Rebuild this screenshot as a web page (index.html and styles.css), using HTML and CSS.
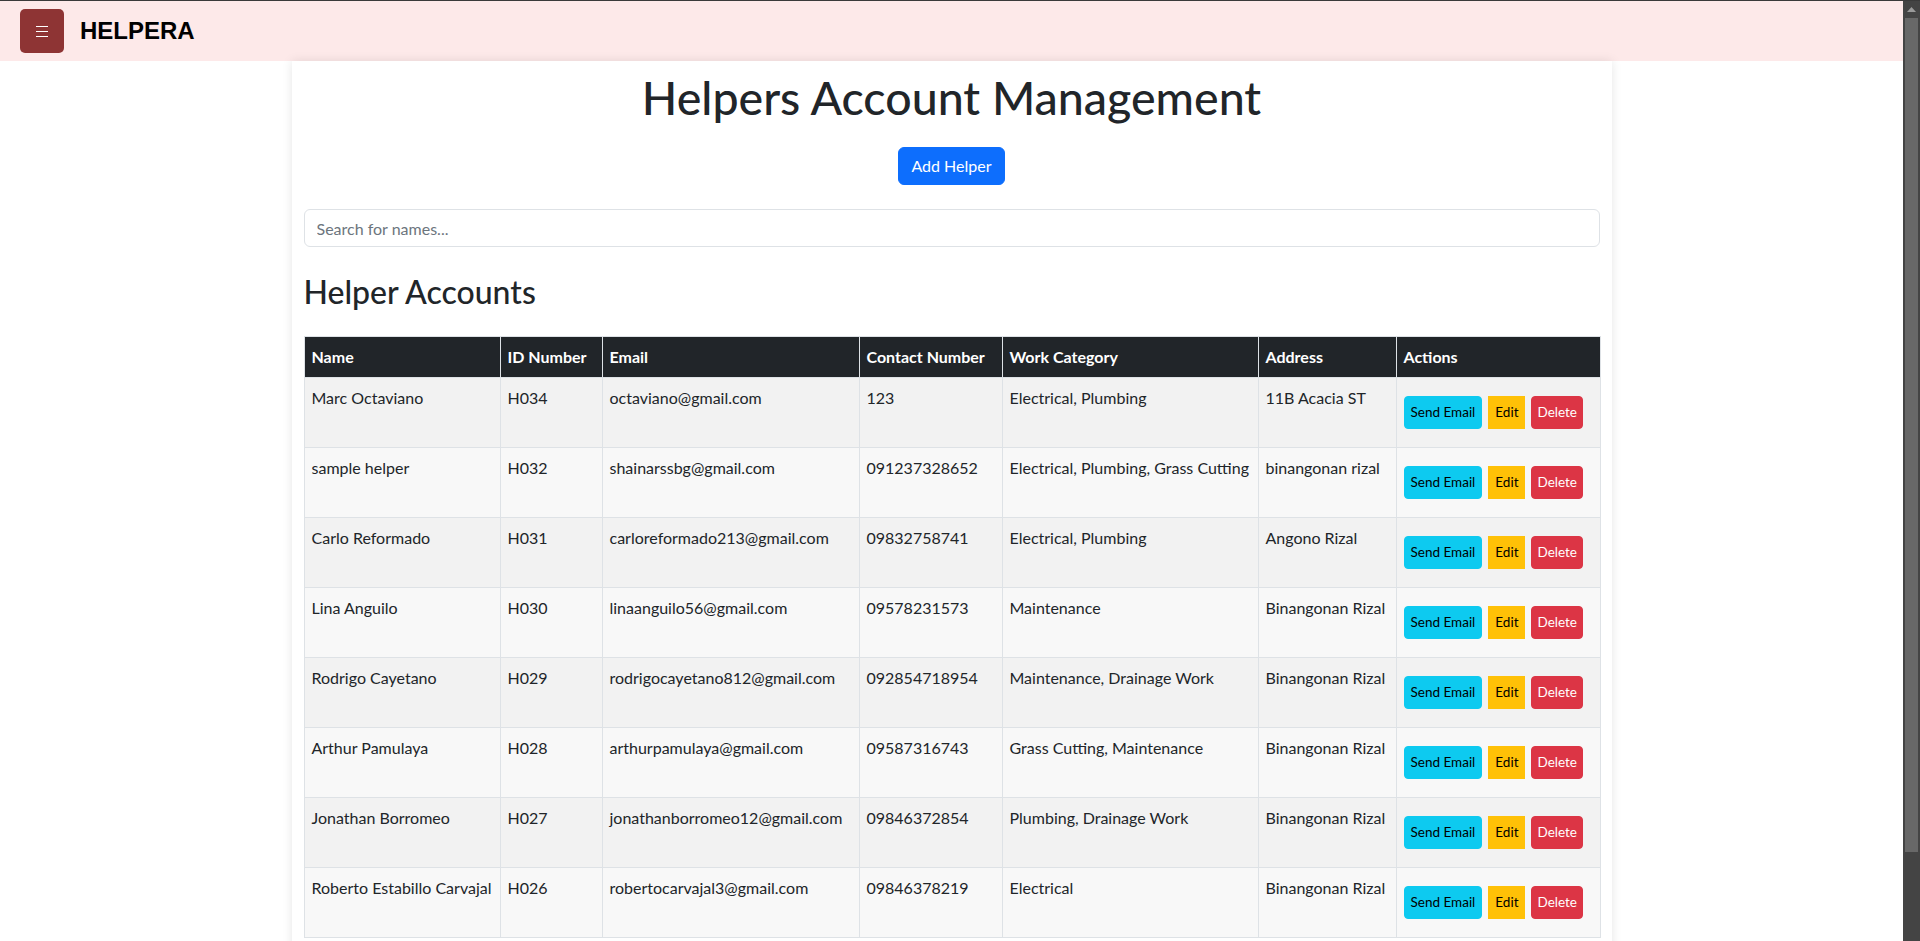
FILE: index.html
```html
<!DOCTYPE html>
<html lang="en">
<head>
<meta charset="utf-8">
<title>Helpers Account Management</title>
<link rel="stylesheet" href="styles.css">
</head>
<body>
<div class="page">
<header class="navbar">
  <button class="menu-btn" type="button" aria-label="Menu">
    <svg width="14" height="12" viewBox="0 0 14 12"><path d="M1 1.5h12M1 6.5h12M1 11.5h12" stroke="#fff" stroke-width="1" fill="none"/></svg>
  </button>
  <span class="brand">HELPERA</span>
</header>
<main class="container">
  <h1 class="page-title">Helpers Account Management</h1>
  <div class="add-row"><button class="btn btn-primary" type="button">Add Helper</button></div>
  <input class="search" type="text" placeholder="Search for names...">
  <h2 class="section-title">Helper Accounts</h2>
  <table class="helpers">
    <colgroup>
      <col class="c-name"><col class="c-id"><col class="c-email"><col class="c-contact"><col class="c-work"><col class="c-address"><col class="c-actions">
    </colgroup>
    <thead>
      <tr><th>Name</th><th>ID Number</th><th>Email</th><th>Contact Number</th><th>Work Category</th><th>Address</th><th>Actions</th></tr>
    </thead>
    <tbody>
      <tr><td>Marc Octaviano</td><td>H034</td><td>octaviano@gmail.com</td><td>123</td><td>Electrical, Plumbing</td><td>11B Acacia ST</td><td class="actions"><div class="btns"><button class="sbtn send">Send Email</button><button class="sbtn edit">Edit</button><button class="sbtn del">Delete</button></div></td></tr>
      <tr><td>sample helper</td><td>H032</td><td>shainarssbg@gmail.com</td><td>091237328652</td><td>Electrical, Plumbing, Grass Cutting</td><td>binangonan rizal</td><td class="actions"><div class="btns"><button class="sbtn send">Send Email</button><button class="sbtn edit">Edit</button><button class="sbtn del">Delete</button></div></td></tr>
      <tr><td>Carlo Reformado</td><td>H031</td><td>carloreformado213@gmail.com</td><td>09832758741</td><td>Electrical, Plumbing</td><td>Angono Rizal</td><td class="actions"><div class="btns"><button class="sbtn send">Send Email</button><button class="sbtn edit">Edit</button><button class="sbtn del">Delete</button></div></td></tr>
      <tr><td>Lina Anguilo</td><td>H030</td><td>linaanguilo56@gmail.com</td><td>09578231573</td><td>Maintenance</td><td>Binangonan Rizal</td><td class="actions"><div class="btns"><button class="sbtn send">Send Email</button><button class="sbtn edit">Edit</button><button class="sbtn del">Delete</button></div></td></tr>
      <tr><td>Rodrigo Cayetano</td><td>H029</td><td>rodrigocayetano812@gmail.com</td><td>092854718954</td><td>Maintenance, Drainage Work</td><td>Binangonan Rizal</td><td class="actions"><div class="btns"><button class="sbtn send">Send Email</button><button class="sbtn edit">Edit</button><button class="sbtn del">Delete</button></div></td></tr>
      <tr><td>Arthur Pamulaya</td><td>H028</td><td>arthurpamulaya@gmail.com</td><td>09587316743</td><td>Grass Cutting, Maintenance</td><td>Binangonan Rizal</td><td class="actions"><div class="btns"><button class="sbtn send">Send Email</button><button class="sbtn edit">Edit</button><button class="sbtn del">Delete</button></div></td></tr>
      <tr><td>Jonathan Borromeo</td><td>H027</td><td>jonathanborromeo12@gmail.com</td><td>09846372854</td><td>Plumbing, Drainage Work</td><td>Binangonan Rizal</td><td class="actions"><div class="btns"><button class="sbtn send">Send Email</button><button class="sbtn edit">Edit</button><button class="sbtn del">Delete</button></div></td></tr>
      <tr><td>Roberto Estabillo Carvajal</td><td>H026</td><td>robertocarvajal3@gmail.com</td><td>09846378219</td><td>Electrical</td><td>Binangonan Rizal</td><td class="actions"><div class="btns"><button class="sbtn send">Send Email</button><button class="sbtn edit">Edit</button><button class="sbtn del">Delete</button></div></td></tr>
    </tbody>
  </table>
</main>
</div>
<div class="scrollbar" aria-hidden="true">
  <div class="sb-arrow"><svg width="9" height="5" viewBox="0 0 9 5"><path d="M4.5 0L9 5H0z" fill="#9a9a9a"/></svg></div>
  <div class="sb-thumb"></div>
</div>
</body>
</html>
```
FILE: styles.css
```css
html,
body {
  height: 100%;
  overflow: hidden;
}

body {
  margin: 0;
  font-family: Lato, "Open Sans", sans-serif;
  font-size: 16px;
  line-height: 1.5;
  color: #212529;
  background: #fff;
  border-top: 1px solid #3a3a3a;
  box-sizing: border-box;
  display: flex;
}

.page {
  flex: 1;
  min-width: 0;
  height: 100%;
  overflow: hidden;
}

.scrollbar {
  width: 17px;
  flex: none;
  background: #444;
  display: flex;
  flex-direction: column;
  align-items: center;
}
.sb-arrow {
  height: 17px;
  width: 100%;
  display: flex;
  align-items: center;
  justify-content: center;
}
.sb-thumb {
  width: 13px;
  height: 834px;
  background: #686868;
}

.navbar {
  height: 60px;
  background: #fde9e9;
  display: flex;
  align-items: center;
  padding-left: 20px;
  gap: 16px;
}
.menu-btn {
  width: 44px;
  height: 44px;
  border: 0;
  border-radius: 5px;
  background: #8e3434;
  display: flex;
  align-items: center;
  justify-content: center;
  padding: 0;
}
.brand {
  font-family: "Liberation Sans", Arial, sans-serif;
  font-weight: 700;
  font-size: 24px;
  color: #000;
}

.container {
  width: 1320px;
  box-sizing: border-box;
  margin: 0 auto;
  padding: 10px 12px 80px;
  background: #fff;
  box-shadow: 0 0 10px rgba(0, 0, 0, 0.1);
}

.page-title {
  margin: 0 0 23px;
  text-align: center;
  font-size: 46.5px;
  font-weight: 500;
  line-height: 1.15;
}

.add-row {
  text-align: center;
  margin-bottom: 24px;
}
.btn {
  font-family: inherit;
  font-size: 16px;
  line-height: 24px;
  padding: 6px 12px;
  border: 1px solid transparent;
  border-radius: 6px;
  cursor: pointer;
}
.btn-primary {
  background: #0d6efd;
  border-color: #0d6efd;
  color: #fff;
}

.search {
  display: block;
  width: 100%;
  box-sizing: border-box;
  height: 38px;
  padding: 6px 12px;
  border: 1px solid #dee2e6;
  border-radius: 6px;
  font-family: inherit;
  font-size: 16px;
  color: #212529;
  margin: 0 0 26px;
}
.search::placeholder {
  color: #6c757d;
}

.section-title {
  font-size: 32px;
  font-weight: 500;
  line-height: 1.2;
  margin: 0 0 24px;
}

.helpers {
  width: 100%;
  table-layout: fixed;
  border-collapse: collapse;
}
.c-name { width: 196px; }
.c-id { width: 102px; }
.c-email { width: 257px; }
.c-contact { width: 143px; }
.c-work { width: 256px; }
.c-address { width: 138px; }
.c-actions { width: 204px; }

.helpers th,
.helpers td {
  border: 1px solid #dee2e6;
  padding: 8px 7px;
  text-align: left;
  vertical-align: top;
}
.helpers th {
  background: #212529;
  color: #fff;
  font-weight: 700;
}
.helpers tbody tr:nth-child(odd) td {
  background: #f2f2f2;
}
.helpers tbody tr:nth-child(even) td {
  background: #f8f8f8;
}
.helpers td.actions {
  padding: 18px 7px;
}
.btns {
  display: flex;
  gap: 6px;
}
.sbtn {
  font-family: inherit;
  font-size: 13.5px;
  height: 33px;
  line-height: 31px;
  padding: 0 6px;
  border: 1px solid transparent;
  border-radius: 4px;
  cursor: pointer;
}
.send {
  background: #0dcaf0;
  border-color: #0dcaf0;
  color: #000;
}
.edit {
  background: #ffc107;
  border-color: #ffc107;
  color: #000;
  border-radius: 0;
}
.del {
  background: #dc3545;
  border-color: #dc3545;
  color: #fff;
  padding: 0 5px;
}
```
